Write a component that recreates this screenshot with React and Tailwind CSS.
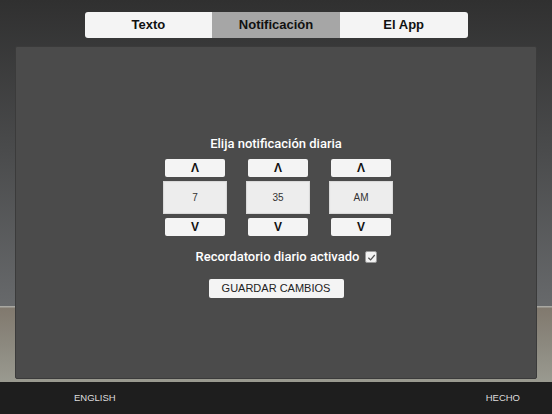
import React, { useState } from 'react';

const font = { fontFamily: '"Liberation Sans", Arial, sans-serif' };
const labelFont = { fontFamily: 'Roboto, "Liberation Sans", Arial, sans-serif' };

function Stepper({ value, onUp, onDown }) {
  return (
    <div className="flex flex-col items-center w-[64px]">
      <button onClick={onUp} className="w-[60px] h-[18px] bg-[#f4f4f4] rounded-[2px] flex items-center justify-center text-[12px] font-bold text-[#111] leading-none">
        Λ
      </button>
      <div className="mt-[4px] w-[64px] h-[33px] bg-[#ededed] border border-[#dadada] shadow-[inset_0_0_1px_rgba(0,0,0,0.1)] flex items-center justify-center text-[10px] text-[#333]">
        {value}
      </div>
      <button onClick={onDown} className="mt-[4px] w-[60px] h-[18px] bg-[#f4f4f4] rounded-[2px] flex items-center justify-center text-[12px] font-bold text-[#111] leading-none">
        V
      </button>
    </div>
  );
}

export default function App() {
  const [tab, setTab] = useState(1);
  const [hour, setHour] = useState(7);
  const [minute, setMinute] = useState(35);
  const [ampm, setAmpm] = useState('AM');
  const [enabled, setEnabled] = useState(true);

  const tabs = ['Texto', 'Notificación', 'El App'];

  return (
    <div
      style={font}
      className="w-[552px] h-[414px] flex flex-col overflow-hidden bg-[linear-gradient(to_bottom,#303030_0px,#4a4b4c_150px,#67696b_306px,#a9a8a2_306px,#a9a8a2_307px,#81796e_308px,#8c897f_345px,#9a9a90_382px,#1e1e1e_382px)]"
    >
      {/* tabs */}
      <div className="mt-[12px] mx-auto flex w-[383px] h-[26px] rounded-[3px] overflow-hidden">
        {tabs.map((t, i) => (
          <button
            key={t}
            onClick={() => setTab(i)}
            className={`flex-1 flex items-center justify-center text-[13px] font-bold text-[#111] ${
              i === tab ? 'bg-[#a6a6a6]' : 'bg-[#f4f4f4]'
            }`}
          >
            {t}
          </button>
        ))}
      </div>

      {/* panel */}
      <div className="mt-[8px] mx-[15px] h-[333px] bg-[#4b4b4b] border border-[#3b3b3b] rounded-[2px] flex flex-col items-center pt-[88px]">
        <div style={labelFont} className="text-[13px] font-medium leading-[18px] text-white">Elija notificación diaria</div>

        <div className="mt-[6px] ml-[4px] flex gap-[19px]">
          <Stepper
            value={hour}
            onUp={() => setHour(h => (h % 12) + 1)}
            onDown={() => setHour(h => (h === 1 ? 12 : h - 1))}
          />
          <Stepper
            value={minute}
            onUp={() => setMinute(m => (m + 1) % 60)}
            onDown={() => setMinute(m => (m + 59) % 60)}
          />
          <Stepper
            value={ampm}
            onUp={() => setAmpm(a => (a === 'AM' ? 'PM' : 'AM'))}
            onDown={() => setAmpm(a => (a === 'AM' ? 'PM' : 'AM'))}
          />
        </div>

        <div className="mt-[12px] ml-[21px] flex items-center gap-[6px]">
          <span style={labelFont} className="text-[13px] font-medium leading-[18px] text-white">Recordatorio diario activado</span>
          <button
            onClick={() => setEnabled(e => !e)}
            className="w-[12px] h-[12px] bg-[#f2f2f2] border border-[#9a9a9a] rounded-[2px] flex items-center justify-center"
          >
            {enabled && (
              <svg width="9" height="9" viewBox="0 0 10 10">
                <path d="M1.5 5.2 L4 7.6 L8.6 2.2" fill="none" stroke="#555" strokeWidth="1.4" />
              </svg>
            )}
          </button>
        </div>

        <button className="mt-[13px] w-[135px] h-[19px] bg-[#f4f4f4] rounded-[2px] text-[11px] text-[#222] flex items-center justify-center">
          GUARDAR CAMBIOS
        </button>
      </div>

      {/* bottom bar */}
      <div className="mt-auto h-[32px] flex items-center justify-between pl-[74px] pr-[32px] text-[9.5px] text-[#dddddd]">
        <span>ENGLISH</span>
        <span>HECHO</span>
      </div>
    </div>
  );
}
